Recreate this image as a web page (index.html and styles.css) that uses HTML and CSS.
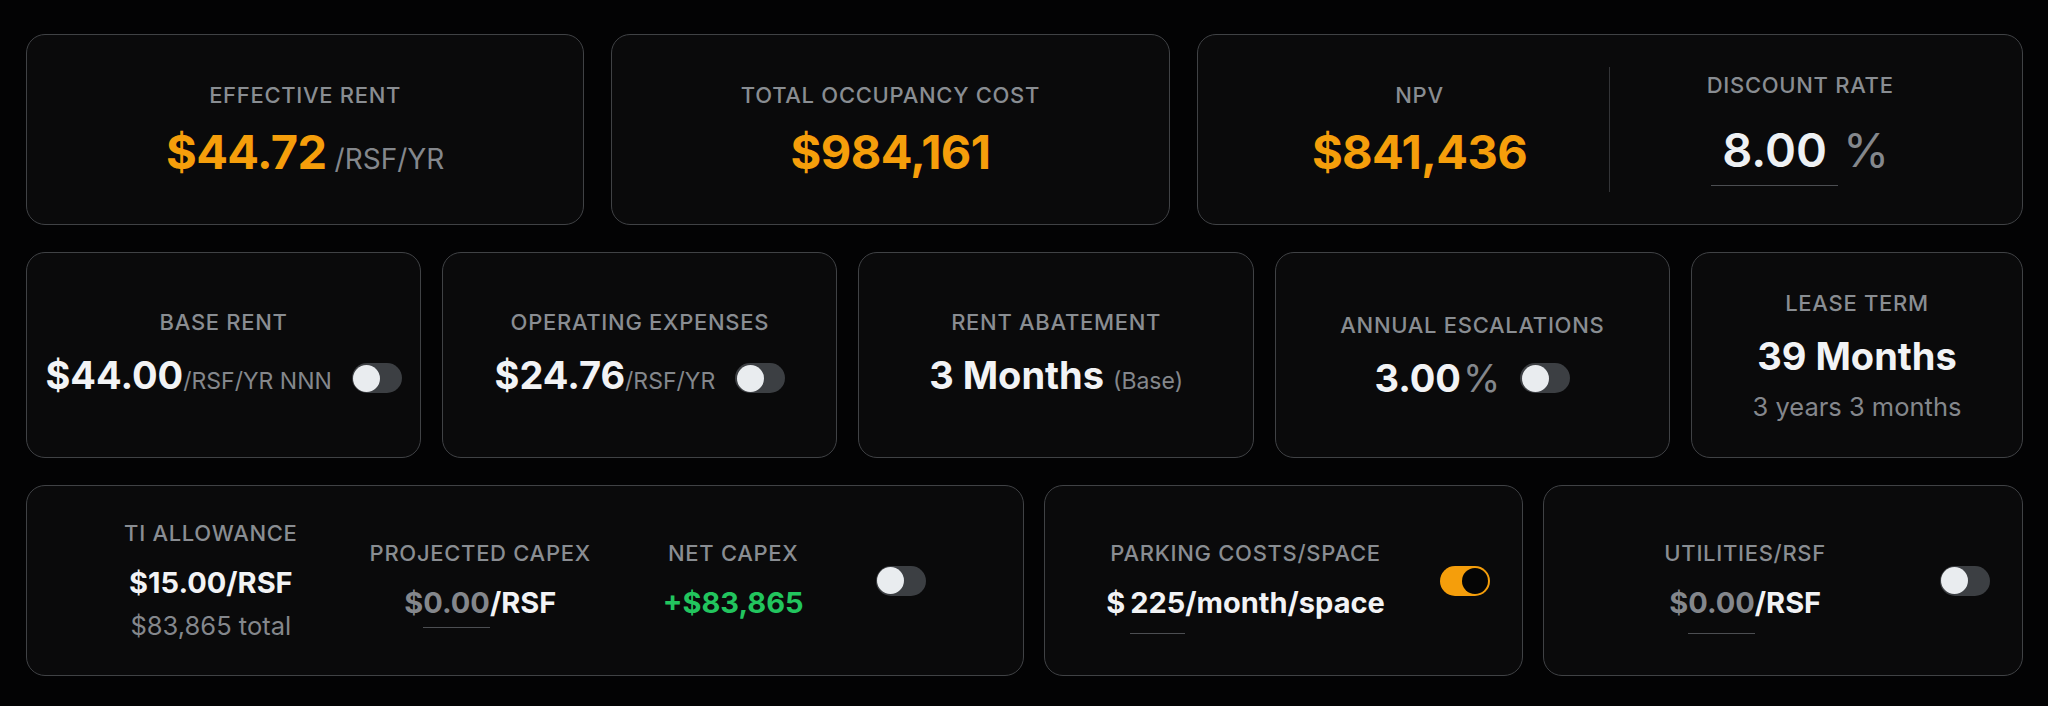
FILE: index.html
```html
<!DOCTYPE html>
<html lang="en">
<head>
  <meta charset="UTF-8" />
  <meta name="viewport" content="width=device-width, initial-scale=1" />
  <title>Lease summary</title>
  <link rel="stylesheet" href="styles.css">
</head>
<body>
  <div class="dashboard">
    <!-- Headline metrics -->
    <div class="row row-top">
      <div class="card">
        <div class="label">Effective Rent</div>
        <div class="big-value"><span class="orange">$44.72</span><span class="unit-lg">/RSF/YR</span></div>
      </div>
      <div class="card">
        <div class="label">Total Occupancy Cost</div>
        <div class="big-value orange">$984,161</div>
      </div>
      <div class="card card-split">
        <div class="half">
          <div class="label">NPV</div>
          <div class="big-value orange">$841,436</div>
        </div>
        <div class="divider"></div>
        <div class="half half-rate">
          <div class="label label-rate">Discount Rate</div>
          <div class="big-value"><span class="rate-input">8.00</span><span class="pct-lg">%</span></div>
        </div>
      </div>
    </div>

    <!-- Lease inputs -->
    <div class="row row-mid">
      <div class="card">
        <div class="label">Base Rent</div>
        <div class="value-line">
          <div class="mid-value">$44.00<span class="unit-sm">/RSF/YR NNN</span></div>
          <span class="toggle"><span class="knob"></span></span>
        </div>
      </div>
      <div class="card">
        <div class="label">Operating Expenses</div>
        <div class="value-line">
          <div class="mid-value">$24.76<span class="unit-sm">/RSF/YR</span></div>
          <span class="toggle"><span class="knob"></span></span>
        </div>
      </div>
      <div class="card">
        <div class="label">Rent Abatement</div>
        <div class="mid-value">3 Months <span class="unit-sm">(Base)</span></div>
      </div>
      <div class="card">
        <div class="label">Annual Escalations</div>
        <div class="value-line">
          <div class="mid-value">3.00<span class="pct-md">%</span></div>
          <span class="toggle"><span class="knob"></span></span>
        </div>
      </div>
      <div class="card">
        <div class="label">Lease Term</div>
        <div class="mid-value">39 Months</div>
        <div class="sub sub-term">3 years 3 months</div>
      </div>
    </div>

    <!-- Capex / extras -->
    <div class="row row-bottom">
      <div class="card card-capex">
        <div class="col">
          <div class="label">TI Allowance</div>
          <div class="sm-value">$15.00/RSF</div>
          <div class="sub">$83,865 total</div>
        </div>
        <div class="col">
          <div class="label">Projected Capex</div>
          <div class="sm-value"><span class="muted">$</span><span class="field muted">0.00</span>/RSF</div>
        </div>
        <div class="col">
          <div class="label">Net Capex</div>
          <div class="sm-value green">+$83,865</div>
        </div>
        <span class="toggle"><span class="knob"></span></span>
      </div>
      <div class="card card-extra">
        <div class="col">
          <div class="label">Parking Costs/Space</div>
          <div class="sm-value">$<span class="field field-tall gap-left">225</span>/month/space</div>
        </div>
        <span class="toggle on"><span class="knob"></span></span>
      </div>
      <div class="card card-extra">
        <div class="col">
          <div class="label">Utilities/RSF</div>
          <div class="sm-value"><span class="muted">$</span><span class="field field-tall muted">0.00</span>/RSF</div>
        </div>
        <span class="toggle"><span class="knob"></span></span>
      </div>
    </div>
  </div>
</body>
</html>
```

FILE: styles.css
```css
body {
  margin: 0;
  padding: 34px 25px 27px 26px;
  background-color: #030304;
  font-family: Inter, "Noto Sans", sans-serif;
  color: #f2f3f5;
}
.dashboard {
  display: flex;
  flex-direction: column;
  gap: 27px;
}
.row {
  display: grid;
  box-sizing: border-box;
}
.row-top {
  grid-template-columns: 1fr 1fr 1.48fr;
  gap: 27px;
  height: 191px;
}
.row-mid {
  grid-template-columns: 1fr 1fr 1fr 1fr 0.84fr;
  gap: 21px;
  height: 206px;
}
.row-bottom {
  grid-template-columns: 2.08fr 1fr 1fr;
  gap: 20px;
  height: 191px;
}
/* Card shell */
.card {
  background: #0a0a0b;
  border: 1px solid #404245;
  border-radius: 19px;
  display: flex;
  flex-direction: column;
  align-items: center;
  justify-content: center;
  text-align: center;
  min-width: 0;
  box-sizing: border-box;
}
.row-top .card {
  padding-top: 2px;
}
.row-mid .card {
  padding-top: 3px;
}
.label {
  font-size: 22px;
  font-weight: 500;
  letter-spacing: 0.7px;
  text-transform: uppercase;
  color: #898d92;
  line-height: 25px;
  margin-bottom: 18px;
  white-space: nowrap;
}
.orange {
  color: #f59e0b;
}
.green {
  color: #22c55e;
}
.muted {
  color: #84878c;
}
.big-value {
  font-size: 47px;
  font-weight: 700;
  line-height: 52px;
  letter-spacing: -0.6px;
  white-space: nowrap;
}
.unit-lg {
  font-size: 28px;
  font-weight: 400;
  line-height: 1;
  letter-spacing: 0;
  color: #84878c;
  margin-left: 8px;
}
.pct-lg {
  font-weight: 400;
  letter-spacing: 0;
  color: #84878c;
  margin-left: 5px;
}
.label-rate {
  margin-bottom: 26px;
}
.rate-input {
  display: inline-block;
  width: 127px;
  font-weight: 600;
  letter-spacing: 0;
  color: #eef1f4;
  padding-bottom: 9px;
  border-bottom: 1.5px solid #4c4e52;
}
/* NPV / discount split card */
.row-top .card-split {
  flex-direction: row;
  align-items: stretch;
  padding: 0 32px;
}
.half {
  flex: 1;
  display: flex;
  flex-direction: column;
  align-items: center;
  justify-content: center;
  padding-top: 2px;
}
.half-rate {
  padding-top: 0;
}
.divider {
  width: 1px;
  background: #333437;
  margin: 32px 0;
}
/* Second row */
.value-line {
  display: flex;
  align-items: center;
  gap: 20px;
}
.mid-value {
  font-size: 38px;
  font-weight: 700;
  line-height: 44px;
  white-space: nowrap;
}
.unit-sm {
  font-size: 23px;
  font-weight: 400;
  color: #84878c;
}
.pct-md {
  font-weight: 400;
  color: #84878c;
  margin-left: 2px;
}
.sub {
  font-size: 25.5px;
  font-weight: 400;
  color: #84878c;
  line-height: 30px;
  margin-top: 11px;
  white-space: nowrap;
}
.sub-term {
  margin-top: 14px;
}
/* Toggle switch */
.toggle {
  width: 50px;
  height: 30px;
  border-radius: 15px;
  background: #3c3f43;
  display: flex;
  align-items: center;
  padding: 0 1.5px;
  box-sizing: border-box;
  flex-shrink: 0;
}
.toggle .knob {
  width: 27px;
  height: 27px;
  border-radius: 50%;
  background: #e9ecef;
}
.toggle.on {
  background: #f59e0b;
  justify-content: flex-end;
  padding: 0 2px;
}
.toggle.on .knob {
  width: 26px;
  height: 26px;
  background: #050505;
}
/* Third row */
.card-capex {
  flex-direction: row;
  gap: 72px;
}
.card-extra {
  flex-direction: row;
  padding: 0 32px;
  gap: 26px;
}
.card-extra .col {
  flex: 1;
}
.col {
  display: flex;
  flex-direction: column;
  align-items: center;
}
.row-bottom .label {
  margin-bottom: 20px;
}
.sm-value {
  font-size: 29px;
  font-weight: 700;
  line-height: 34px;
  white-space: nowrap;
}
/* underlined inputs; negative margin keeps the line height unchanged */
.field {
  display: inline-block;
  padding-bottom: 7px;
  margin-bottom: -8.5px;
  border-bottom: 1.5px solid #4c4e52;
}
.field-tall {
  padding-bottom: 13px;
  margin-bottom: -14.5px;
}
.gap-left {
  margin-left: 5px;
}
```
